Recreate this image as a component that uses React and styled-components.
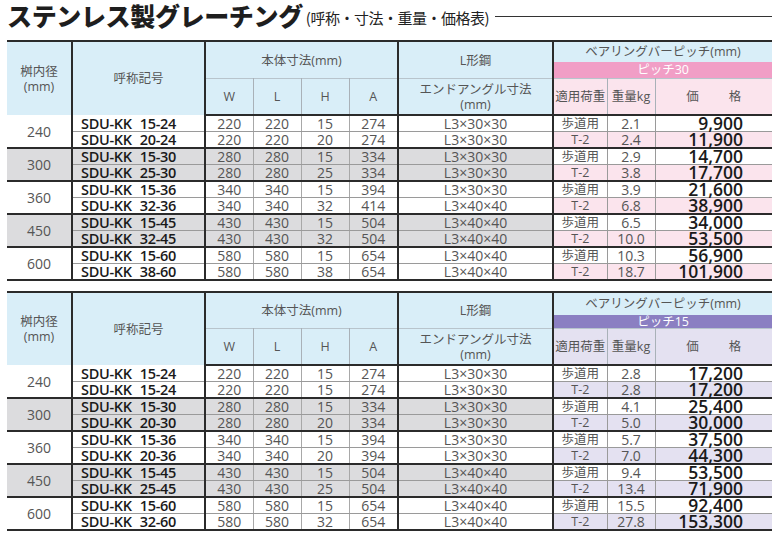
import React from "react";
import styled, { createGlobalStyle } from "styled-components";

const GlobalStyle = createGlobalStyle`
  body {
    margin: 0;
    background: #fff;
    font-family: "Open Sans", "Noto Sans CJK JP", sans-serif;
  }
`;

const table1 = [
  { size: 240, rows: [["15-24", 220, 220, 15, 274, "L3×30×30", "2.1", "9,900"], ["20-24", 220, 220, 20, 274, "L3×30×30", "2.4", "11,900"]] },
  { size: 300, rows: [["15-30", 280, 280, 15, 334, "L3×30×30", "2.9", "14,700"], ["25-30", 280, 280, 25, 334, "L3×30×30", "3.8", "17,700"]] },
  { size: 360, rows: [["15-36", 340, 340, 15, 394, "L3×30×30", "3.9", "21,600"], ["32-36", 340, 340, 32, 414, "L3×40×40", "6.8", "38,900"]] },
  { size: 450, rows: [["15-45", 430, 430, 15, 504, "L3×40×40", "6.5", "34,000"], ["32-45", 430, 430, 32, 504, "L3×40×40", "10.0", "53,500"]] },
  { size: 600, rows: [["15-60", 580, 580, 15, 654, "L3×40×40", "10.3", "56,900"], ["38-60", 580, 580, 38, 654, "L3×40×40", "18.7", "101,900"]] },
];

const table2 = [
  { size: 240, rows: [["15-24", 220, 220, 15, 274, "L3×30×30", "2.8", "17,200"], ["15-24", 220, 220, 15, 274, "L3×30×30", "2.8", "17,200"]] },
  { size: 300, rows: [["15-30", 280, 280, 15, 334, "L3×30×30", "4.1", "25,400"], ["20-30", 280, 280, 20, 334, "L3×30×30", "5.0", "30,000"]] },
  { size: 360, rows: [["15-36", 340, 340, 15, 394, "L3×30×30", "5.7", "37,500"], ["20-36", 340, 340, 20, 394, "L3×30×30", "7.0", "44,300"]] },
  { size: 450, rows: [["15-45", 430, 430, 15, 504, "L3×40×40", "9.4", "53,500"], ["25-45", 430, 430, 25, 504, "L3×40×40", "13.4", "71,900"]] },
  { size: 600, rows: [["15-60", 580, 580, 15, 654, "L3×40×40", "15.5", "92,400"], ["32-60", 580, 580, 32, 654, "L3×40×40", "27.8", "153,300"]] },
];

const widths = [65, 133, 48, 48, 48, 49, 155, 54, 48, 117];

const PriceTable = ({ data, pitch, band, tint, top, bandH }) => (
  <Table>
    <colgroup>
      {widths.map((w, i) => (
        <col key={i} style={{ width: w }} />
      ))}
    </colgroup>
    <thead>
      <tr>
        <Head rowSpan={3} $thick>
          桝内径
          <br />
          (mm)
        </Head>
        <Head rowSpan={3} $thick>呼称記号</Head>
        <Head colSpan={4} rowSpan={2} $thick style={{ height: top }}>
          本体寸法(mm)
        </Head>
        <Head rowSpan={2} $thick>L形鋼</Head>
        <Head colSpan={3} style={{ height: top - bandH - 1 }}>
          ベアリングバーピッチ(mm)
        </Head>
      </tr>
      <tr>
        <Band colSpan={3} $bg={band} style={{ height: bandH }}>
          {pitch}
        </Band>
      </tr>
      <tr>
        <Sub>W</Sub>
        <Sub>L</Sub>
        <Sub>H</Sub>
        <Sub $thick>A</Sub>
        <Sub $thick>
          エンドアングル寸法
          <br />
          (mm)
        </Sub>
        <Sub $bg={tint}>適用荷重</Sub>
        <Sub $bg={tint}>重量kg</Sub>
        <Sub $bg={tint} $last>
          価<Gap />格
        </Sub>
      </tr>
    </thead>
    {data.map((g, gi) => (
      <Group key={g.size} $gray={gi % 2 === 1}>
        {g.rows.map((r, ri) => (
          <tr key={ri}>
            {ri === 0 && <SizeCell rowSpan={2}>{g.size}</SizeCell>}
            <Model>
              SDU-KK<Space />
              {r[0]}
            </Model>
            <Num>{r[1]}</Num>
            <Num>{r[2]}</Num>
            <Num>{r[3]}</Num>
            <Num $thick>{r[4]}</Num>
            <Num $thick>{r[5]}</Num>
            <Load $bg={ri === 1 ? tint : "#fff"}>{ri === 0 ? "歩道用" : "T-2"}</Load>
            <Weight $bg={ri === 1 ? tint : "#fff"}>{r[6]}</Weight>
            <Price $bg={ri === 1 ? tint : "#fff"}>{r[7]}</Price>
          </tr>
        ))}
      </Group>
    ))}
  </Table>
);

const App = () => (
  <Page>
    <GlobalStyle />
    <TitleRow>
      <Title>ステンレス製グレーチング</Title>
      <Subtitle>(呼称・寸法・重量・価格表)</Subtitle>
      <Rule />
    </TitleRow>
    <PriceTable data={table1} pitch="ピッチ30" band="#f19ec6" tint="#fbe4ed" top={36} bandH={16} />
    <Spacer />
    <PriceTable data={table2} pitch="ピッチ15" band="#8b7fc2" tint="#e4e1f1" top={35} bandH={13} />
  </Page>
);

const Page = styled.div`
  width: 780px;
  height: 534px;
  padding: 0 0 0 7px;
  box-sizing: border-box;
  overflow: hidden;
`;

const TitleRow = styled.div`
  display: flex;
  align-items: center;
  height: 30px;
  width: 765px;
  margin-bottom: 10px;
`;

const Title = styled.h1`
  margin: 0;
  font-family: "Noto Sans CJK JP", sans-serif;
  font-weight: 900;
  font-size: 25px;
  letter-spacing: -0.35px;
  color: #1e1e1e;
  line-height: 30px;
`;

const Subtitle = styled.span`
  font-family: "Noto Sans CJK JP", sans-serif;
  font-size: 15px;
  color: #222;
  margin-left: 3px;
  margin-top: 4px;
  letter-spacing: -0.5px;
`;

const Rule = styled.div`
  flex: 1;
  height: 1px;
  background: #333;
  margin: 3px 0 0 6px;
`;

const Spacer = styled.div`
  height: 10px;
`;

const Table = styled.table`
  width: 765px;
  table-layout: fixed;
  border-collapse: collapse;
  border-top: 2px solid #2b2b2b;
  border-bottom: 2px solid #2b2b2b;
  font-family: "Open Sans", "Noto Sans CJK JP", sans-serif;
  color: #555;
  td,
  th {
    padding: 0;
    text-align: center;
    font-weight: normal;
    white-space: nowrap;
  }
`;

const Head = styled.th`
  background: #d9eef8;
  font-size: 12.5px;
  line-height: 15px;
  color: #555;
  border-right: ${(p) => (p.$thick ? "2px solid #2b2b2b" : "none")};
`;

const Band = styled.th`
  background: ${(p) => p.$bg};
  color: #fff;
  font-size: 12.5px;
  line-height: 13px;
`;

const Sub = styled.th`
  height: 35px;
  background: ${(p) => p.$bg || "#d9eef8"};
  font-size: 12.5px;
  line-height: 15px;
  color: #555;
  border-top: 1px solid #b8c4cc;
  border-bottom: 2px solid #2b2b2b;
  border-right: ${(p) =>
    p.$thick ? "2px solid #2b2b2b" : p.$last ? "none" : "1px solid #a9b1b8"};
`;

const Gap = styled.span`
  display: inline-block;
  width: 30px;
`;

const Space = styled.span`
  display: inline-block;
  width: 8px;
`;

const Group = styled.tbody`
  border-bottom: 2px solid #2b2b2b;
  td {
    background: ${(p) => (p.$gray ? "#dcdcde" : "#fff")};
  }
  tr:first-child td {
    border-bottom: 1px solid #9a9a9a;
  }
`;

const SizeCell = styled.td`
  font-size: 14px;
  color: #555;
  border-right: 2px solid #2b2b2b;
`;

const Model = styled.td`
  height: 15px;
  line-height: 15px;
  font-size: 14.5px;
  color: #1a1a1a;
  border-right: 2px solid #2b2b2b;
  && {
    text-align: left;
    padding-left: 8px;
    font-weight: 600;
    letter-spacing: -0.3px;
  }
`;

const Num = styled.td`
  font-size: 14px;
  line-height: 15px;
  color: #555;
  border-right: ${(p) => (p.$thick ? "2px solid #2b2b2b" : "1px solid #a8a8a8")};
`;

const Load = styled.td`
  && {
    background: ${(p) => p.$bg};
  }
  font-size: 12.5px;
  line-height: 15px;
  color: #555;
  border-right: 1px solid #9a9a9a;
`;

const Weight = styled(Load)`
  font-size: 14px;
`;

const Price = styled.td`
  && {
    background: ${(p) => p.$bg};
    text-align: right;
    padding-right: 29px;
    font-weight: 600;
  }
  font-size: 17.5px;
  line-height: 15px;
  color: #1a1a1a;
`;

export default App;
